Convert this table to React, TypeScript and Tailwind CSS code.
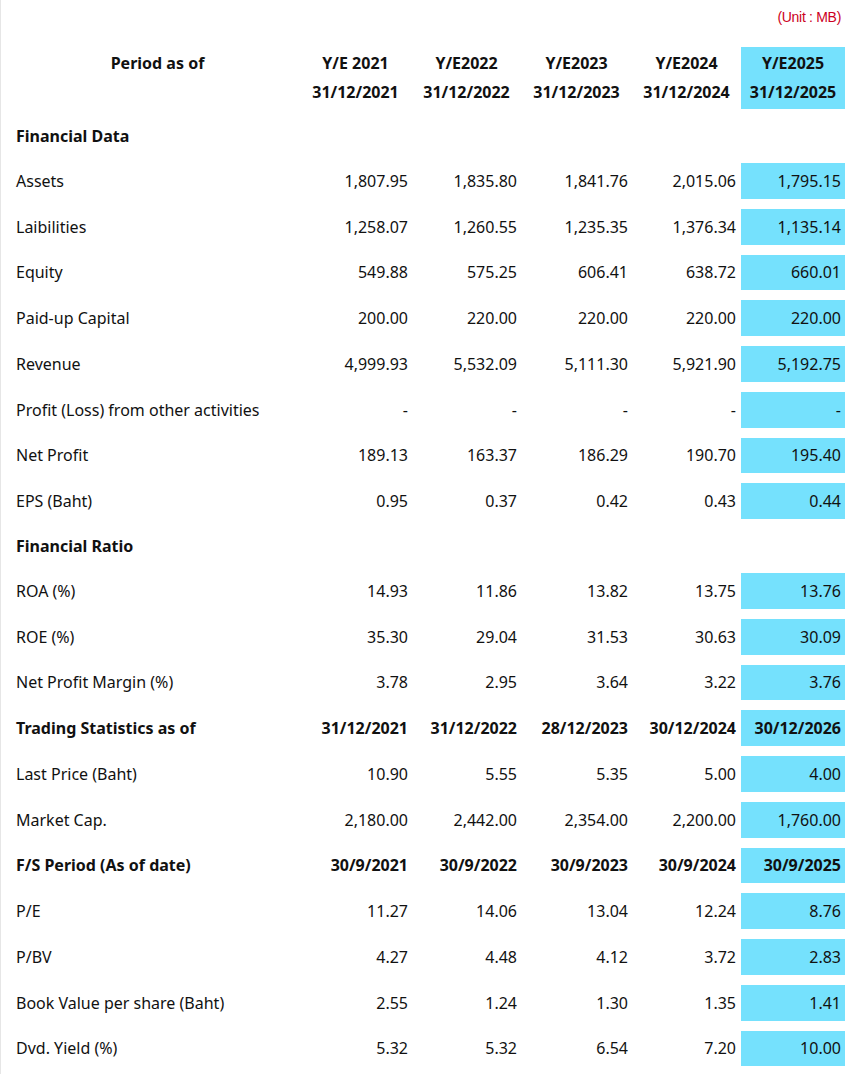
import React from 'react';

type Row =
  | { kind: 'section'; label: string; values?: string[] }
  | { kind: 'data'; label: string; values: string[] };

const rows: Row[] = [
  { kind: 'section', label: 'Financial Data' },
  { kind: 'data', label: 'Assets', values: ['1,807.95', '1,835.80', '1,841.76', '2,015.06', '1,795.15'] },
  { kind: 'data', label: 'Laibilities', values: ['1,258.07', '1,260.55', '1,235.35', '1,376.34', '1,135.14'] },
  { kind: 'data', label: 'Equity', values: ['549.88', '575.25', '606.41', '638.72', '660.01'] },
  { kind: 'data', label: 'Paid-up Capital', values: ['200.00', '220.00', '220.00', '220.00', '220.00'] },
  { kind: 'data', label: 'Revenue', values: ['4,999.93', '5,532.09', '5,111.30', '5,921.90', '5,192.75'] },
  { kind: 'data', label: 'Profit (Loss) from other activities', values: ['-', '-', '-', '-', '-'] },
  { kind: 'data', label: 'Net Profit', values: ['189.13', '163.37', '186.29', '190.70', '195.40'] },
  { kind: 'data', label: 'EPS (Baht)', values: ['0.95', '0.37', '0.42', '0.43', '0.44'] },
  { kind: 'section', label: 'Financial Ratio' },
  { kind: 'data', label: 'ROA (%)', values: ['14.93', '11.86', '13.82', '13.75', '13.76'] },
  { kind: 'data', label: 'ROE (%)', values: ['35.30', '29.04', '31.53', '30.63', '30.09'] },
  { kind: 'data', label: 'Net Profit Margin (%)', values: ['3.78', '2.95', '3.64', '3.22', '3.76'] },
  { kind: 'section', label: 'Trading Statistics as of', values: ['31/12/2021', '31/12/2022', '28/12/2023', '30/12/2024', '30/12/2026'] },
  { kind: 'data', label: 'Last Price (Baht)', values: ['10.90', '5.55', '5.35', '5.00', '4.00'] },
  { kind: 'data', label: 'Market Cap.', values: ['2,180.00', '2,442.00', '2,354.00', '2,200.00', '1,760.00'] },
  { kind: 'section', label: 'F/S Period (As of date)', values: ['30/9/2021', '30/9/2022', '30/9/2023', '30/9/2024', '30/9/2025'] },
  { kind: 'data', label: 'P/E', values: ['11.27', '14.06', '13.04', '12.24', '8.76'] },
  { kind: 'data', label: 'P/BV', values: ['4.27', '4.48', '4.12', '3.72', '2.83'] },
  { kind: 'data', label: 'Book Value per share (Baht)', values: ['2.55', '1.24', '1.30', '1.35', '1.41'] },
  { kind: 'data', label: 'Dvd. Yield (%)', values: ['5.32', '5.32', '6.54', '7.20', '10.00'] },
];

const periods = [
  ['Y/E 2021', '31/12/2021'],
  ['Y/E2022', '31/12/2022'],
  ['Y/E2023', '31/12/2023'],
  ['Y/E2024', '31/12/2024'],
  ['Y/E2025', '31/12/2025'],
];

const colWidths = ['w-[113px]', 'w-[109px]', 'w-[111px]', 'w-[109px]', 'w-[104px]'];

export default function App() {
  return (
    <div className="min-h-[1074px] bg-white border-l border-[#e6e6e6] text-[#111] font-['Noto_Sans',sans-serif] text-[16px]">
      {/* unit note */}
      <div className="flex justify-end pr-[14px] pt-[7px] h-[47px]">
        <span className="font-['Liberation_Sans',sans-serif] text-[14px] text-[#cc0022] tracking-[-0.3px]">(Unit : MB)</span>
      </div>

      {/* header */}
      <div className="flex h-[62px] font-bold">
        <div className="w-[298px] pl-[15px] flex items-start justify-center pt-[5px] leading-[22px]">Period as of</div>
        {periods.map((p, i) => (
          <div
            key={p[0]}
            className={`${colWidths[i]} flex flex-col items-center pt-[5px] gap-[7px] leading-[22px] ${i === 4 ? 'bg-[#75e1fd]' : ''}`}
          >
            <span>{p[0]}</span>
            <span>{p[1]}</span>
          </div>
        ))}
      </div>

      <div className="flex flex-col gap-[10px] pt-[10px]">
        {rows.map((r) => (
          <div key={r.label} className={`flex items-center ${r.kind === 'section' && !r.values ? 'h-[34px]' : 'h-[35.75px]'} ${r.kind === 'section' ? 'font-bold' : ''}`}>
            <div className="w-[298px] pl-[15px]">{r.label}</div>
            {r.values &&
              r.values.map((v, i) => (
                <div
                  key={i}
                  className={`${colWidths[i]} h-full flex items-center justify-end ${i === 3 ? 'pr-[5px]' : 'pr-[4px]'} ${i === 4 ? 'bg-[#75e1fd]' : ''}`}
                >
                  {v}
                </div>
              ))}
          </div>
        ))}
      </div>
    </div>
  );
}
